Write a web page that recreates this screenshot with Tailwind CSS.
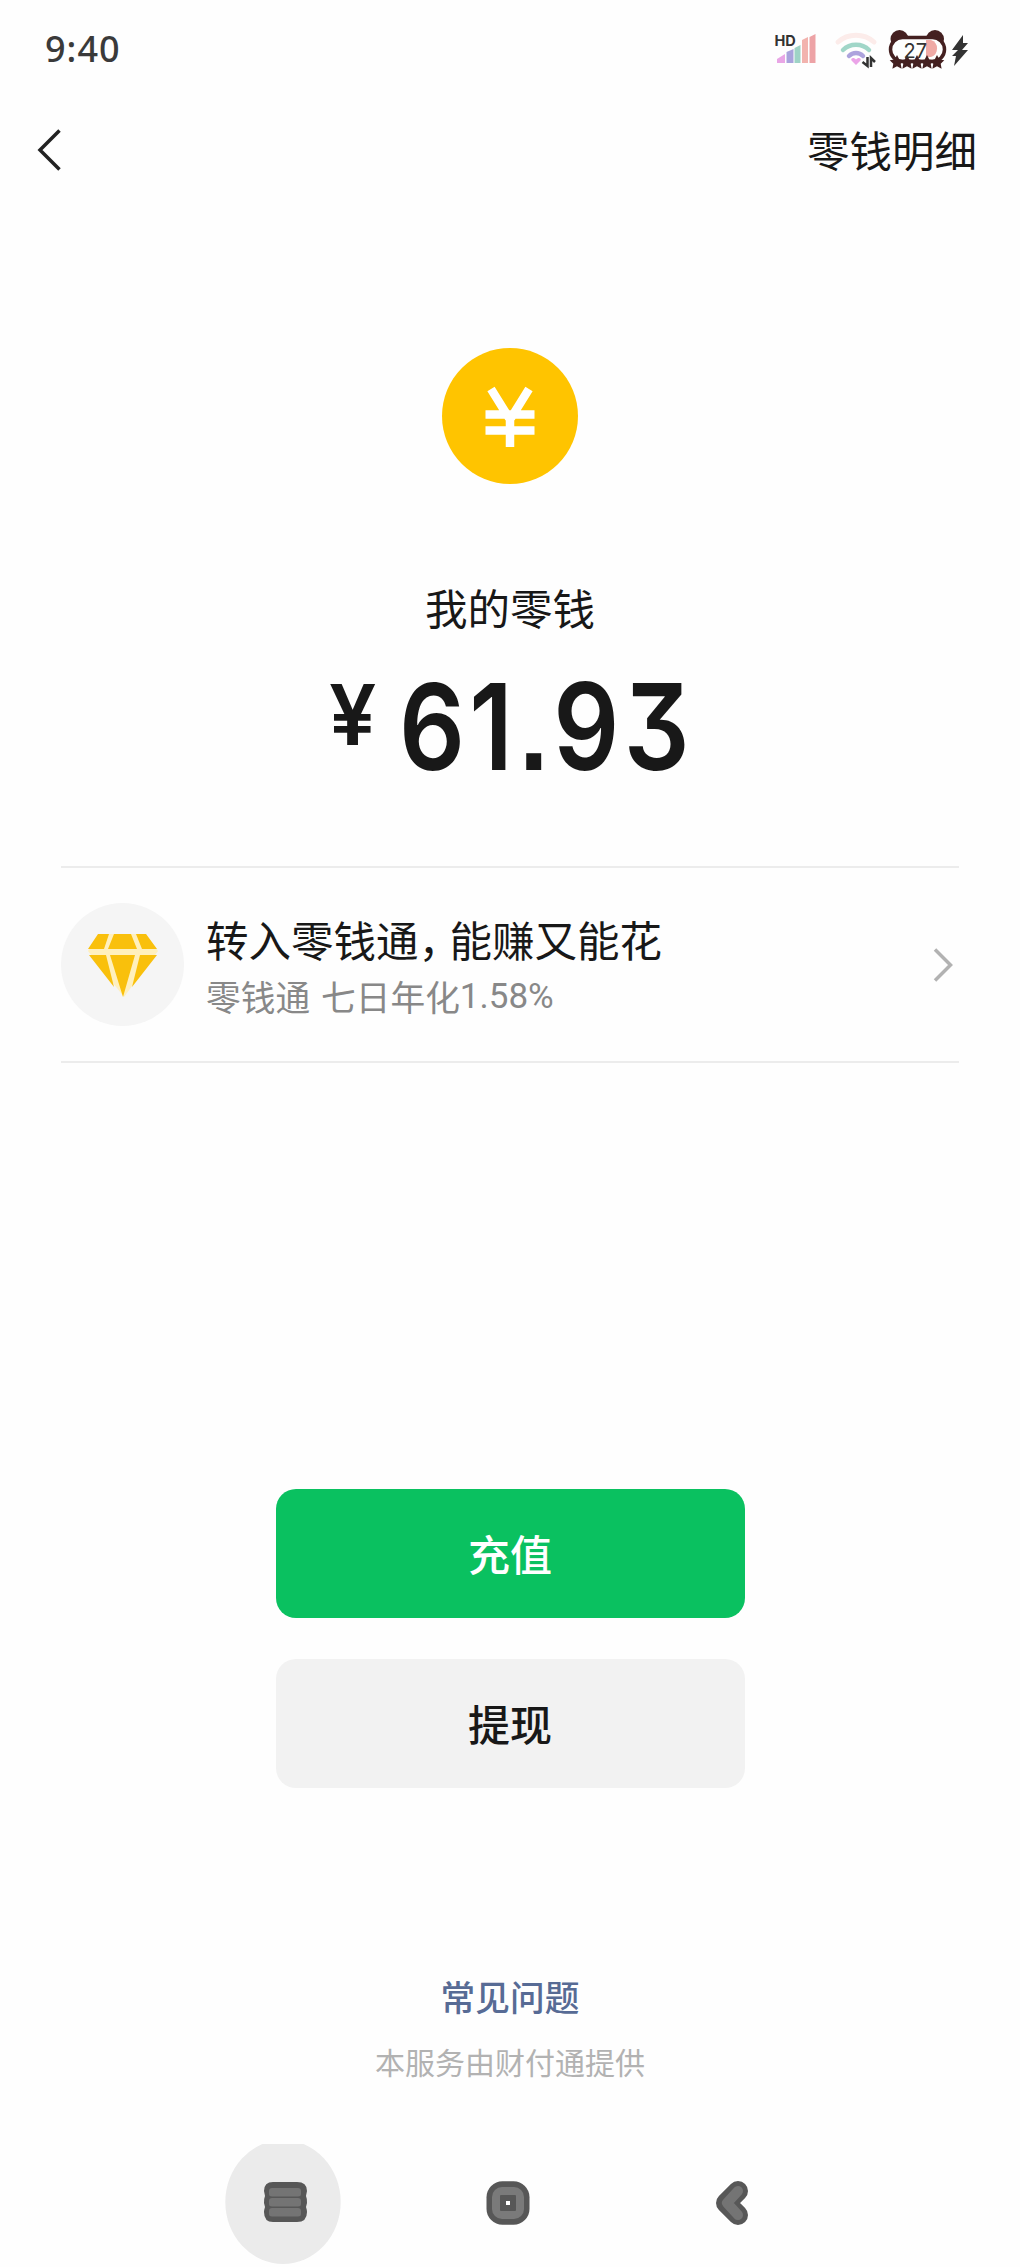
<!DOCTYPE html>
<html lang="zh-CN">
<head>
<meta charset="utf-8">
<title>零钱</title>
<script src="https://cdn.jsdelivr.net/npm/@tailwindcss/browser@4"></script>
</head>
<body class="bg-[#fefefe]">
<div class="mx-auto flex h-[2267px] w-[1020px] flex-col overflow-hidden bg-[#fefefe] font-['Noto_Sans_CJK_SC',sans-serif] text-[#181818]">

  <!-- status bar -->
  <header class="flex h-[98px] shrink-0 items-center justify-between pr-[49px] pl-[45px]">
    <span class="font-['Noto_Sans',sans-serif] text-[36px] leading-none font-medium tracking-[1px] text-[#3a3a3a]">9:40</span>
    <svg class="h-[65px] w-[212px]" viewBox="0 0 212 65">
      <text x="15.500" y="28.500" font-family="Inter, sans-serif" font-size="14.5" font-weight="700" fill="#333">HD</text>
      <path d="M18 46v-4l8-5v9z" fill="#e9a6e6"/>
      <path d="M27.500 46V35l7-3v14z" fill="#a9a3dc"/>
      <path d="M35.500 46V31l6-3v18z" fill="#9ed3c6"/>
      <path d="M43 46V23l6-3v26z" fill="#f2b3ae"/>
      <path d="M50.500 46V20l6-3v29z" fill="#eda3a6"/>
      <g fill="none" stroke-linecap="round">
        <path d="M79 25c10-9 26-9 36 0" stroke="#fcecea" stroke-width="5"/>
        <path d="M84 33c7-7 19-7 26 0" stroke="#a0d6c8" stroke-width="4.500"/>
        <path d="M90 39c4-4 10-4 14 0" stroke="#ada3dd" stroke-width="4.500"/>
      </g>
      <path d="M97 48l-4.500-4.500c-1.500-3 3-3.500 4.500-1 1.500-2.500 6-2 4.500 1z" fill="#eba4e8"/>
      <path d="M103.500 45l5 4v-9M112 50v-9l4 4" fill="none" stroke="#333" stroke-width="2.500"/>
      <circle cx="140.500" cy="22" r="9" fill="#442020"/>
      <circle cx="176" cy="22" r="9" fill="#442020"/>
      <rect x="131.500" y="20.500" width="54" height="24" rx="12" fill="#fefefe" stroke="#442020" stroke-width="3.500"/>
      <path d="M167 23h5a9 9 0 0 1 0 17h-5z" fill="#f0aaa6"/>
      <g fill="#442020">
        <path id="star" d="M138 38l2.300 4.500 5 .7-3.600 3.500.9 5-4.600-2.400-4.600 2.400.9-5-3.600-3.500 5-.7z"/>
        <use href="#star" x="10"/><use href="#star" x="20"/><use href="#star" x="30"/><use href="#star" x="40"/>
      </g>
      <text x="144.500" y="41" font-family="Inter, sans-serif" font-size="20" font-weight="400" fill="#333">27</text>
      <path d="M204 18l-11 15h6l-6 6h4l-2 10 14-16h-6l6-7h-5z" fill="#333"/>
    </svg>
  </header>

  <!-- navigation bar -->
  <nav class="flex h-[104px] shrink-0 items-center justify-between pr-[43px] pl-[35px]">
    <svg class="h-12 w-7" viewBox="0 0 28 48" fill="none" stroke="#222" stroke-width="3.500"><path d="M24.500 4.500L5 24l19.500 19.500"/></svg>
    <span class="pb-[1px] text-[42.500px] leading-none">零钱明细</span>
  </nav>

  <!-- balance -->
  <section class="flex h-[664px] shrink-0 flex-col items-center">
    <svg class="mt-[145px] size-[138px]" viewBox="0 0 138 138">
      <circle cx="69" cy="69" r="68" fill="#ffc400"/>
      <path d="M50 42l18 29M88 42L70 71M44.500 67.500h49M44.500 83.500h49M69 65v35" fill="none" stroke="#fff" stroke-width="8.500"/>
    </svg>
    <h1 class="mt-[101px] text-[42.500px] leading-[42px] font-normal">我的零钱</h1>
    <div class="mt-[39px] flex h-[120px] w-[362px] items-start font-['Inter',sans-serif] font-semibold">
      <span class="w-[70px] shrink-0 pt-[6px] text-[84px] leading-[84px]">¥</span>
      <span class="origin-left scale-x-[.86] text-[120px] leading-[120px] tracking-[5px] [font-feature-settings:'cv09'_1,'ss07'_1]">61.93</span>
    </div>
  </section>

  <!-- transfer entry -->
  <section class="mx-[61px] flex h-[197px] shrink-0 items-center border-y-2 border-[#ececec]">
    <svg class="size-[123px]" viewBox="0 0 123 123">
      <circle cx="61.500" cy="61.500" r="61.500" fill="#f5f5f5"/>
      <path d="M38 31h47l12 17-34 46-36-46z" fill="#fff0bd"/>
      <g fill="#f9c00c">
        <path d="M37 31h11l-5 15H27zM53 31h17l6 15H47zM75 31h10l11 15H81zM28 52h17l8 32zM49 52h25L62 94zM79 52h17L71 84z"/>
      </g>
    </svg>
    <div class="ml-[22px] flex grow flex-col gap-[19px] pt-[2px]">
      <p class="flex text-[42.500px] leading-[42px]"><span>转入零钱通</span><span class="w-[31px] [font-feature-settings:'halt'_1]">，</span><span>能赚又能花</span></p>
      <p class="flex text-[34.700px] leading-[34px] text-[#888]"><span>零钱通</span><span class="ml-[11px]">七日年化</span><span class="pt-[1px] font-['Roboto',sans-serif] text-[35px]">1.58%</span></p>
    </div>
    <svg class="mr-1 h-9 w-6" viewBox="0 0 24 36" fill="none" stroke="#b2b2b2" stroke-width="3.500"><path d="M4 2.500L19.500 18 4 33.500"/></svg>
  </section>

  <!-- actions -->
  <div class="mx-auto mt-[426px] flex w-[469px] shrink-0 flex-col gap-[41px]">
    <button class="h-[129px] rounded-[20px] bg-[#0ac160] pb-[2px] text-[42px] leading-none font-medium text-white">充值</button>
    <button class="h-[129px] rounded-[20px] bg-[#f2f2f2] pb-[2px] text-[42px] leading-none font-medium">提现</button>
  </div>

  <footer class="mt-[190px] flex h-[166px] shrink-0 flex-col items-center">
    <a class="text-[34.700px] leading-[36px] font-medium text-[#576b95]">常见问题</a>
    <p class="mt-[31px] text-[30px] leading-[32px] text-[#b2b2b2]">本服务由财付通提供</p>
  </footer>

  <!-- system navigation -->
  <div class="flex h-[123px] shrink-0 items-start pl-[225px]">
    <svg class="h-[121px] w-[116px]" viewBox="0 0 116 121">
      <ellipse cx="58" cy="58" rx="57.700" ry="62" fill="#ebebeb"/>
      <path d="M48 38h24q10 0 10 9-1 5-1 5 1 2 1 7l-1 4q1 3 1 5 0 10-10 10H48q-9 0-9-10 0-2 1-5l-1-4q0-5 1-7 0 0-1-5 0-9 9-9z" fill="#575757"/>
      <path d="M47 44h26q3 0 3 3v3q0 2.500-3 2.500H47q-3 0-3-2.500v-3q0-3 3-3zM47 54h26q3 0 3 3v3q0 2.500-3 2.500H47q-3 0-3-2.500v-3q0-3 3-3zM47 64h26q3 0 3 3v3q0 2.500-3 2.500H47q-3 0-3-2.500v-3q0-3 3-3z" fill="#747474"/>
    </svg>
    <svg class="mt-[37px] ml-[145px] size-11" viewBox="0 0 44 44">
      <rect x=".5" y=".3" width="43" height="43.500" rx="16" fill="#575757"/>
      <rect x="6" y="6" width="32" height="32" rx="10" fill="#7a7a7a"/>
      <rect x="14" y="14" width="16" height="16" rx="1" fill="#575757"/>
      <rect x="20" y="20" width="4" height="4" fill="#fff"/>
    </svg>
    <svg class="mt-[37px] ml-[186px] h-11 w-8" viewBox="0 0 32 44" fill="none" stroke-linecap="round" stroke-linejoin="round">
      <path d="M22 10L10 22l12 12" stroke="#575757" stroke-width="20"/>
      <path d="M22 10L11 22l11 12" stroke="#747474" stroke-width="10"/>
    </svg>
  </div>
</div>
</body>
</html>
